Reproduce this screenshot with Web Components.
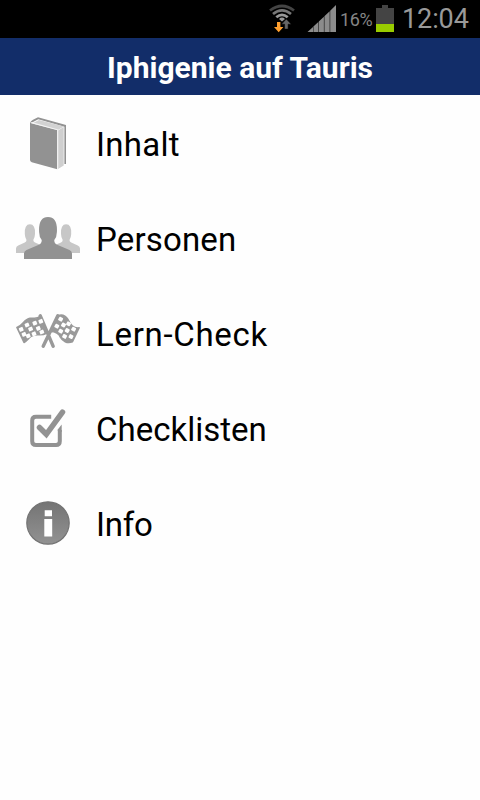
<!DOCTYPE html>
<html lang="de">
<head>
<meta charset="utf-8">
<title>Iphigenie auf Tauris</title>
<style>
html, body { margin: 0; height: 100%; background: #fefefe; }
body { font-family: Roboto, "Noto Sans", sans-serif; overflow: hidden; }
</style>
</head>
<body>
<study-app></study-app>

<template id="status-tpl">
<style>
:host { display: flex; height: 38px; background: #000; justify-content: flex-end; align-items: flex-start; box-sizing: border-box; padding-right: 11px; }
svg { display: block; flex: none; }
.pct { font-size: 18px; line-height: 38px; height: 38px; width: 36px; color: #858585; padding-left: 3px; box-sizing: border-box; margin-top: 1px; letter-spacing: -.4px; white-space: nowrap; }
.time { font-size: 27px; line-height: 38px; color: #999; width: 67px; margin-left: 8px; white-space: nowrap; letter-spacing: -.1px; }
</style>
<svg width="36" height="38" viewBox="268 0 36 38">
  <g fill="none" stroke-width="2.8">
    <path d="M270 10.5Q282 1.5 294 10.5" stroke="#444"/>
    <path d="M273 14Q282 6.8 291 14" stroke="#777"/>
    <path d="M276.3 17.3Q282 12.5 287.7 17.3" stroke="#999"/>
  </g>
  <path d="M279 19Q282 16.2 285 19L282 21.5Z" fill="#999"/>
  <path d="M277 22h3.4v5h3l-4.7 5.3L274 27h3Z" fill="#ff9f2f"/>
  <path d="M286.3 19l5 5.2h-3.2v4.9h-3.5v-4.9h-3.2Z" fill="#666" stroke="#000" stroke-width=".5"/>
</svg>
<svg width="33" height="38" viewBox="304 0 33 38">
  <path d="M307.500 32l5.500-5v5ZM313.400 26.500l4.900-4.500v10h-4.900ZM318.800 21.500l5.100-4.700V32h-5.100ZM324.400 16.300l5.300-5v20.700h-5.300ZM330.200 10.800l5.800-5.800v27h-5.800Z" fill="#8c8c8c"/>
</svg>
<span class="pct">16%</span>
<svg width="21" height="38" viewBox="373 0 21 38">
  <path d="M376 8h6V5h6v3h6v16h-18Z" fill="#444"/><path d="M376 24h18v8h-18Z" fill="#99cc00"/>
</svg>
<span class="time">12:04</span>
</template>

<template id="title-tpl">
<style>
:host { display: flex; height: 57px; background: #122d69; color: #fff; align-items: center; justify-content: center; font-weight: 700; font-size: 30px; letter-spacing: 0; white-space: nowrap; padding-top: 2px; box-sizing: border-box; }
</style>
<span><slot></slot></span>
</template>

<template id="row-tpl">
<style>
:host { display: flex; height: 95px; box-sizing: border-box; padding: 16px 16px 15px; gap: 16px; align-items: center; color: #000; }
.icon { width: 64px; height: 64px; flex: none; }
.label { font-size: 33px; line-height: 40px; padding-top: 3px; letter-spacing: var(--track, 0.3px); white-space: nowrap; }
svg { display: block; }
</style>
<div class="icon"><svg width="64" height="64" viewBox="0 0 64 64"></svg></div>
<span class="label"><slot></slot></span>
</template>

<template id="app-tpl">
<style>
:host { display: flex; flex-direction: column; height: 800px; width: 480px; }
[icon="people"] { --track: .15px; }
[icon="flags"] { --track: .7px; }
[icon="check"] { --track: 0px; }
[icon="info"] { --track: -.2px; }
</style>
<status-bar></status-bar>
<title-bar>Iphigenie auf Tauris</title-bar>
<menu-row icon="book">Inhalt</menu-row>
<menu-row icon="people">Personen</menu-row>
<menu-row icon="flags">Lern-Check</menu-row>
<menu-row icon="check">Checklisten</menu-row>
<menu-row icon="info">Info</menu-row>
</template>

<script>
const square = angle => ([x, y]) => `<rect x="${x - 2.1}" y="${y - 2}" width="4.2" height="4" rx=".8" transform="rotate(${angle} ${x} ${y})"/>`;
const leftSquares = [[5.2, 28.3], [11, 24], [18.8, 22.2], [14.6, 28], [22.3, 27.3], [8, 33.300], [18, 32.800], [25.8, 31], [12.2, 34.8], [24.8, 20.300]].map(square(-22)).join("");
const rightSquares = [[44.6, 18.2], [40.8, 25.2], [47.5, 24], [52.6, 22.800], [44.7, 30.2], [51.2, 29.5], [57.600, 28.2], [48.600, 35.400], [55, 35.600]].map(square(28)).join("");
const icons = {
  book: `<path d="M14 12Q14.5 10 17 8.7L22 6.2 50 14V53h-1.6V15.7L22.3 8.3 17 11Z" fill="#929292"/>
    <path d="M17 12l6-3 25 6.6-6.5 3.6Z" fill="#d2d2d2"/>
    <path d="M42 19.5l5.7-3.5v38.5L42 58Z" fill="#cfcfcf"/>
    <path d="M14 11.7L41.3 19v39.2L15.8 51.2Q14 50.5 14 49Z" fill="#929292"/>
    <path d="M15.3 11.6L41.7 18.8V58" fill="none" stroke="#f4f4f4" stroke-width="1.1"/>`,
  people: `<g fill="#c7c7c7"><path d="M0 47v-4.5q0-2 2.2-3l6.6-3q1.8-.8 1.7-2.5-1.6-2.6-1.7-6-.5-9.8 5.1-9.8t5.1 9.800q-.1 3.400-1.700 6 0 1.700 1.700 2.500l7 3V47Z"/>
    <path d="M64 47v-4.500q0-2-2.200-3l-6.600-3q-1.800-.8-1.700-2.500 1.600-2.600 1.700-6 .5-9.800-5.100-9.800t-5.100 9.800q.1 3.400 1.700 6 0 1.700-1.700 2.500l-7 3V47Z"/></g>
    <path d="M8 53v-5.500q0-2.300 2.500-3.600l11.800-4.800q3.700-1.500 3.400-5.100-2.500-3-2.600-8Q22.300 11 32 11t8.900 15q-.1 5-2.600 8-.3 3.600 3.400 5.100l11.800 4.800q2.500 1.300 2.500 3.600V53Z" fill="#929292"/>`,
  flags: `<path d="M24.200 14.700L37.200 45.300M41.800 14.700L27.200 45.300" stroke="#999" stroke-width="3.400" stroke-linecap="round"/>
    <path d="M.9 26.500C7 24.500 8 18 14 17.200 18 16.700 20 19 24.500 15L31 32C24 36 20 31.500 15 35.500 12 37.500 11 40 8 41.500ZM41.800 14.700C46 13 49.500 14.500 52 18.500 54.500 23.500 57 27.500 63.200 26.800L56.500 40.800C51 43 46.500 40 44.500 36.500 43 32.500 40 30.500 34.500 30.500Z" fill="#999" stroke="#999" stroke-width="1.500" stroke-linejoin="round"/>
    <g fill="#fefefe">${leftSquares}${rightSquares}</g>`,
  check: `<path d="M35.200 20.700H20Q16.200 20.700 16.200 24.500V45.200Q16.200 49 20 49H40Q43.800 49 43.800 45.200V34" fill="none" stroke="#929292" stroke-width="4"/>
    <path d="M41.800 35v-1.500l3.900-5v7.500Z" fill="#929292"/><path d="M23.500 31.500L30.300 38.300 46.500 16.200" fill="none" stroke="#929292" stroke-width="5.500" stroke-linecap="round"/>`,
  info: `<defs><linearGradient id="g" x2="0" y2="1"><stop offset="0" stop-color="#747474"/><stop offset="1" stop-color="#929292"/></linearGradient></defs>
    <circle cx="32" cy="32" r="21.200" fill="url(#g)" stroke="#737373" stroke-width="1.200"/>
    <path d="M28.700 19.200h7.300v6h-7.300ZM28.300 28h7.900v17.600h-7.900Z" fill="#fff"/>`
};
function define(name, templateId, setup) {
  customElements.define(name, class extends HTMLElement {
    connectedCallback() {
      if (this.shadowRoot) return;
      this.attachShadow({ mode: "open" }).append(document.getElementById(templateId).content.cloneNode(true));
      if (setup) setup(this);
    }
  });
}
define("status-bar", "status-tpl");
define("title-bar", "title-tpl");
define("menu-row", "row-tpl", el => { el.shadowRoot.querySelector("svg").innerHTML = icons[el.getAttribute("icon")]; });
define("study-app", "app-tpl");
</script>
</body>
</html>
